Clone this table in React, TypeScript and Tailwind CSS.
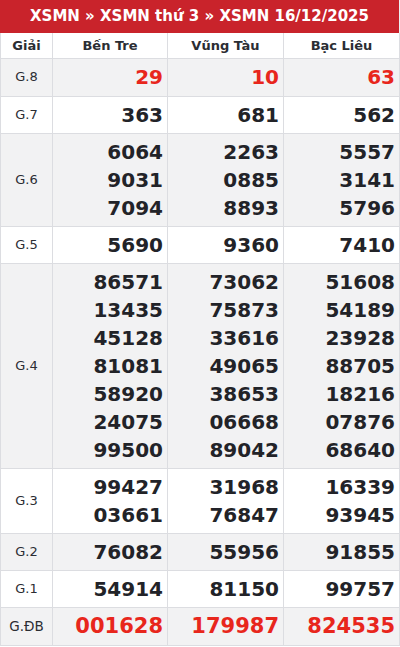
const provinces = ["Bến Tre", "Vũng Tàu", "Bạc Liêu"];

const rows: { label: string; values: string[][]; red?: boolean; big?: boolean }[] = [
  { label: "G.8", values: [["29"], ["10"], ["63"]], red: true },
  { label: "G.7", values: [["363"], ["681"], ["562"]] },
  {
    label: "G.6",
    values: [
      ["6064", "9031", "7094"],
      ["2263", "0885", "8893"],
      ["5557", "3141", "5796"],
    ],
  },
  { label: "G.5", values: [["5690"], ["9360"], ["7410"]] },
  {
    label: "G.4",
    values: [
      ["86571", "13435", "45128", "81081", "58920", "24075", "99500"],
      ["73062", "75873", "33616", "49065", "38653", "06668", "89042"],
      ["51608", "54189", "23928", "88705", "18216", "07876", "68640"],
    ],
  },
  {
    label: "G.3",
    values: [
      ["99427", "03661"],
      ["31968", "76847"],
      ["16339", "93945"],
    ],
  },
  { label: "G.2", values: [["76082"], ["55956"], ["91855"]] },
  { label: "G.1", values: [["54914"], ["81150"], ["99757"]] },
  { label: "G.ĐB", values: [["001628"], ["179987"], ["824535"]], red: true, big: true },
];

export default function App() {
  return (
    <div className="w-[400px] bg-[#eceef1] font-['DejaVu_Sans',sans-serif]">
      <div className="w-[399px] bg-white">
        <div className="h-[33px] bg-[#c9232b] text-white text-[15px] font-bold flex items-center justify-center">
          XSMN » XSMN thứ 3 » XSMN 16/12/2025
        </div>
        <table className="w-[399px] border-collapse table-fixed">
          <colgroup>
            <col className="w-[52px]" />
            <col className="w-[115px]" />
            <col className="w-[116px]" />
            <col className="w-[116px]" />
          </colgroup>
          <thead>
            <tr className="h-[25px] text-[13px] font-bold text-[#2b2d33]">
              <th className="border border-[#dcdde1] border-t-0 font-bold">Giải</th>
              {provinces.map((p) => (
                <th key={p} className="border border-[#dcdde1] border-t-0 font-bold">
                  {p}
                </th>
              ))}
            </tr>
          </thead>
          <tbody>
            {rows.map((r, i) => (
              <tr key={r.label} className={i % 2 === 0 ? "bg-[#f2f2f3]" : "bg-white"}>
                <td
                  className={`border border-[#dcdde1] text-center text-[#2b2d33] ${
                    r.big ? "text-[13.5px]" : "text-[13px]"
                  }`}
                >
                  {r.label}
                </td>
                {r.values.map((col, j) => (
                  <td
                    key={j}
                    className={`border border-[#dcdde1] text-right pr-[4px] py-[4px] align-middle font-bold ${
                      r.red ? "text-[#e8261c] leading-[29px]" : "text-[#222328] leading-[28px]"
                    } ${r.big ? "text-[21px]" : "text-[20px]"}`}
                  >
                    {col.map((n) => (
                      <div key={n}>{n}</div>
                    ))}
                  </td>
                ))}
              </tr>
            ))}
          </tbody>
        </table>
      </div>
    </div>
  );
}
